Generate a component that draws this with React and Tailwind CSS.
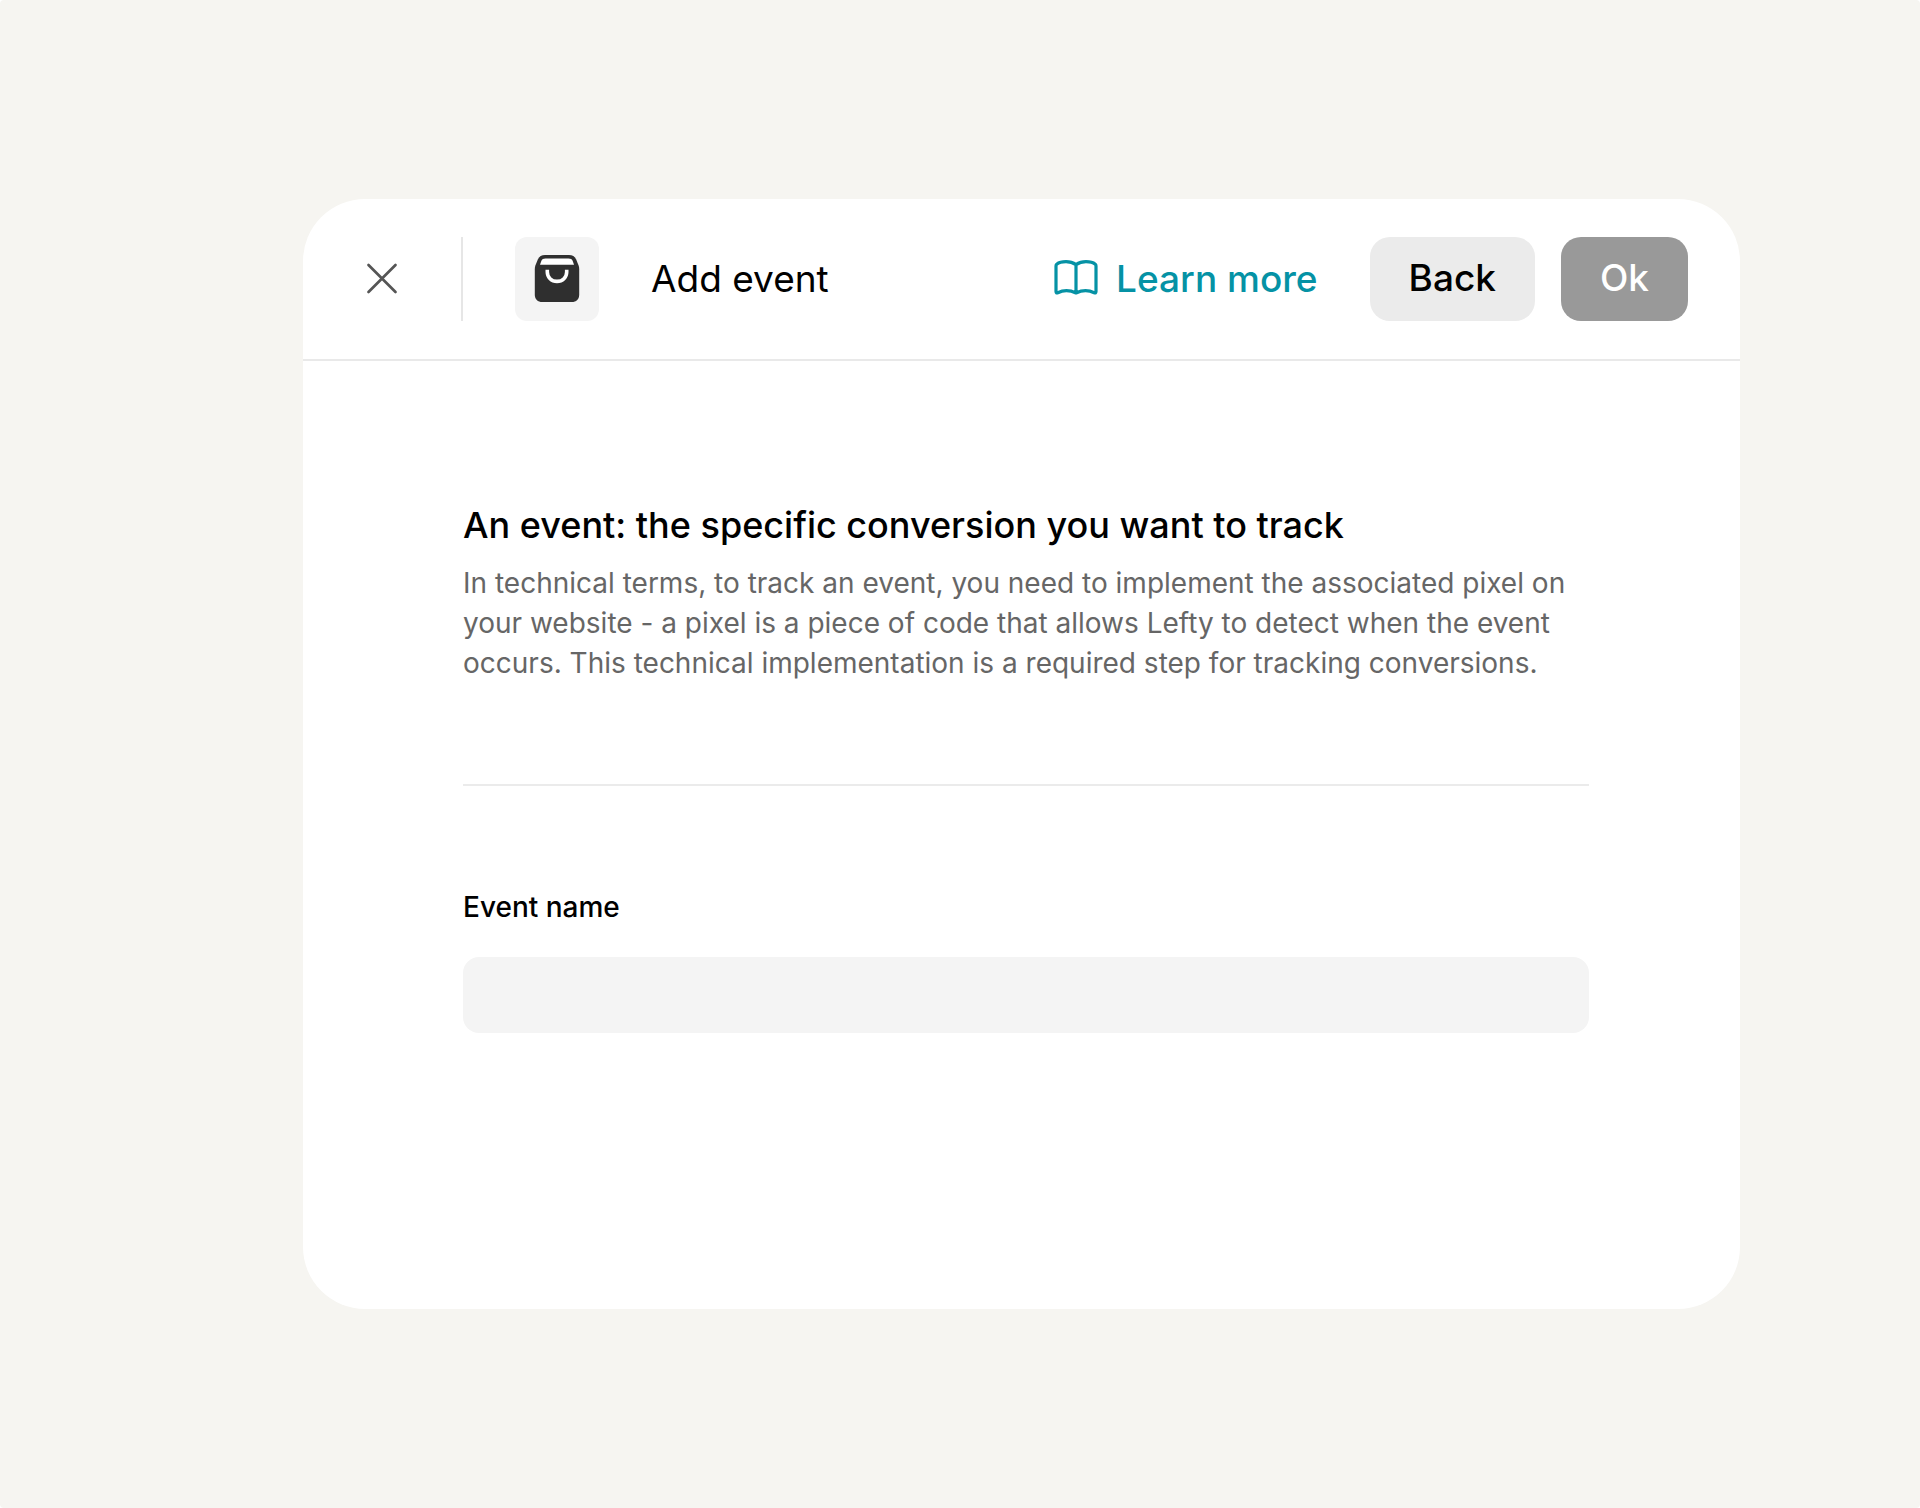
function CloseIcon() {
  return (
    <svg width="32" height="32" viewBox="0 0 32 32" fill="none" stroke="#555555" strokeWidth="2.7" strokeLinecap="round" aria-hidden="true">
      <path d="M2.500 2l27 27M29.500 2L2.500 29" />
    </svg>
  );
}

function BagIcon() {
  return (
    <svg width="46" height="48" viewBox="0 0 46 48" fill="none" aria-hidden="true">
      <path
        d="M11 0H35C38.500 0 40.800 1.3 42.2 4.500L44.6 10.500C45 11.700 45.2 12.800 45.2 14.3V39.500C45.2 44.400 42.300 47 37.700 47H8.300C3.700 47 0.8 44.400 0.8 39.500V14.3C0.8 12.800 1 11.700 1.4 10.500L3.8 4.500C5.200 1.300 7.500 0 11 0Z"
        fill="#2f2f2f"
      />
      <path d="M11.500 3.500H34.500C36.800 3.500 37.900 4.2 38.600 5.800L40 9.800H6L7.400 5.800C8.100 4.200 9.200 3.500 11.500 3.500Z" fill="#fff" />
      <path d="M13.300 14.700V17C13.300 22.300 17.400 26.400 23 26.400S32.700 22.300 32.700 17V14.700" stroke="#fff" strokeWidth="3.600" />
    </svg>
  );
}

function BookIcon() {
  return (
    <svg width="44" height="38" viewBox="0 0 44 38" fill="none" stroke="currentColor" strokeWidth="3.2" strokeLinejoin="round" strokeLinecap="round" aria-hidden="true">
      <path d="M22 4.600C19 2.600 15.500 1.700 12 1.700S5 2.400 2.700 4.200Q2 4.800 2 6V31.600Q2 33.500 3.800 32.800C9 30.200 16 30.200 22 33C28 30.200 35 30.200 40.200 32.800Q42 33.500 42 31.600V6Q42 4.800 41.300 4.200C39 2.400 35.500 1.700 32 1.700S25 2.600 22 4.600V33" />
    </svg>
  );
}

export default function App() {
  return (
    <div className="min-h-screen bg-white font-['Inter',sans-serif] text-black">
      <main className="min-h-screen rounded bg-[#f6f5f1] pt-[199px] pr-[180px] pb-[199px] pl-[303px]">
        <section className="rounded-[62px] bg-white pb-[276px]">
          <header className="flex items-center border-b-2 border-[#e9e9e9] py-[38px] pr-[52px] pl-[63px]">
            <button type="button" aria-label="Close">
              <CloseIcon />
            </button>
            <span className="mr-[52px] ml-[63px] h-[84px] w-0.5 bg-[#e6e6e6]" />
            <span className="flex size-[84px] items-center justify-center rounded-xl bg-[#f4f4f4]">
              <BagIcon />
            </span>
            <h1 className="ml-[52px] text-[37px] leading-[44px]">Add event</h1>
            <a href="#learn-more" className="ml-auto flex items-center gap-[18px] text-[37px] leading-[44px] font-medium text-[#0592a5]">
              <BookIcon />
              Learn more
            </a>
            <button type="button" className="ml-[52px] h-[84px] rounded-[20px] bg-[#ebebeb] px-[39px] pb-0.5 text-[37px] leading-[44px] font-medium">
              Back
            </button>
            <button type="button" className="ml-[26px] h-[84px] rounded-[20px] bg-[#999999] px-[39px] pb-0.5 text-[37px] leading-[44px] font-medium text-white">
              Ok
            </button>
          </header>

          <div className="pt-[142px] pr-[151px] pl-[160px]">
            <h2 className="text-[36px] leading-[44px] font-medium">An event: the specific conversion you want to track</h2>
            <p className="mt-4 text-[28px] leading-[40px] text-[#666666]">
              In technical terms, to track an event, you need to implement the associated pixel on your website - a pixel is a piece of code that allows Lefty to detect when the event occurs. This technical implementation is a required step for tracking conversions.
            </p>
            <hr className="mt-[101px] border-t-2 border-[#ebebeb]" />
            <label htmlFor="event-name" className="mt-[101px] block text-[28px] leading-[40px] font-medium">
              Event name
            </label>
            <input
              id="event-name"
              type="text"
              className="mt-[30px] block h-[76px] w-full rounded-2xl bg-[#f4f4f4] px-6 text-[28px] outline-none"
            />
          </div>
        </section>
      </main>
    </div>
  );
}
